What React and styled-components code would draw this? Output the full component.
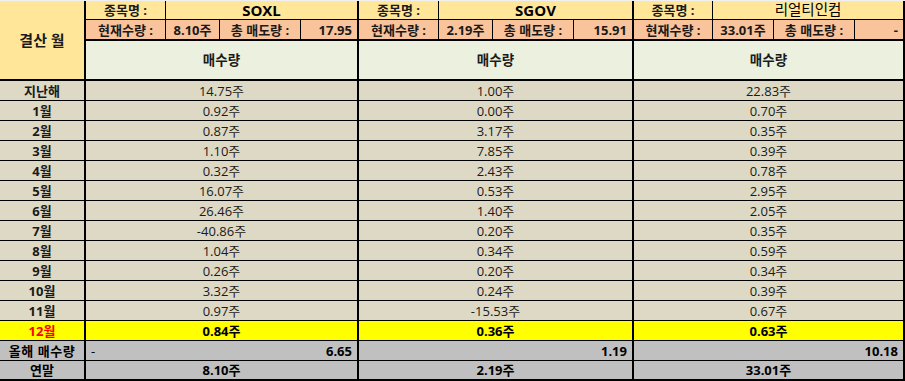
import React from 'react';
import styled, { createGlobalStyle } from 'styled-components';

const GlobalStyle = createGlobalStyle`
  html, body {
    margin: 0;
    padding: 0;
    background: #f0f0f0;
  }
  body {
    font-family: "Open Sans", "Noto Sans CJK KR", sans-serif;
  }
`;

const COLS = [86, 80, 54, 81, 58, 80, 54, 81, 60, 79, 61, 81, 50];

const Sheet = styled.div`
  display: grid;
  grid-template-columns: ${COLS.map((w) => `${w}px`).join(' ')};
  grid-template-rows: 19px 21px 40px repeat(13, 20px) 20px 20px;
  padding-top: 1px;
  width: 905px;
`;

const Cell = styled.div`
  box-sizing: border-box;
  display: flex;
  align-items: center;
  justify-content: ${(p) => p.$align || 'center'};
  grid-column: span ${(p) => p.$span || 1};
  grid-row: span ${(p) => p.$rows || 1};
  border-right: ${(p) => (p.$br ?? 1)}px solid #000;
  border-bottom: ${(p) => (p.$bb ?? 1)}px solid #000;
  background: ${(p) => p.$bg || '#DDD9C4'};
  color: ${(p) => p.$color || '#1a1a1a'};
  font-size: ${(p) => p.$size || 13}px;
  font-weight: ${(p) => (p.$bold ? 700 : 400)};
  padding: 1px ${(p) => (p.$align && p.$align !== 'center' ? 5 : 0)}px 0;
  white-space: nowrap;
  line-height: 1;
  letter-spacing: ${(p) => (p.$spread ? '0.04em' : 'normal')};
`;

const C = {
  gold: '#FFE699',
  peach: '#F9C39B',
  mint: '#EBF1DE',
  tan: '#DDD9C4',
  yellow: '#FFFF00',
  gray: '#C0C0C0',
};

const stocks = [
  { name: 'SOXL', bold: true, qty: '8.10주', sold: '17.95', year: '6.65', dash: true, end: '8.10주', dec: '0.84주' },
  { name: 'SGOV', bold: true, qty: '2.19주', sold: '15.91', year: '1.19', end: '2.19주', dec: '0.36주' },
  { name: '리얼티인컴', bold: false, qty: '33.01주', sold: '-', year: '10.18', end: '33.01주', dec: '0.63주' },
];

const months = [
  ['지난해', '14.75주', '1.00주', '22.83주'],
  ['1월', '0.92주', '0.00주', '0.70주'],
  ['2월', '0.87주', '3.17주', '0.35주'],
  ['3월', '1.10주', '7.85주', '0.39주'],
  ['4월', '0.32주', '2.43주', '0.78주'],
  ['5월', '16.07주', '0.53주', '2.95주'],
  ['6월', '26.46주', '1.40주', '2.05주'],
  ['7월', '-40.86주', '0.20주', '0.35주'],
  ['8월', '1.04주', '0.34주', '0.59주'],
  ['9월', '0.26주', '0.20주', '0.34주'],
  ['10월', '3.32주', '0.24주', '0.39주'],
  ['11월', '0.97주', '-15.53주', '0.67주'],
];

const App = () => {
  return (
    <>
      <GlobalStyle />
      <Sheet>
        {/* header row 1 */}
        <Cell $rows={3} $bg={C.gold} $br={2} $bb={2} $bold $size={15}>결산 월</Cell>
        {stocks.map((s) => (
          <React.Fragment key={'a' + s.name}>
            <Cell $bg={C.gold} $bold>종목명 :</Cell>
            <Cell $span={3} $bg={C.gold} $br={2} $bold={s.bold} $size={s.bold ? 15 : 14.5} $color="#000">
              {s.name}
            </Cell>
          </React.Fragment>
        ))}

        {/* header row 2 */}
        {stocks.map((s) => (
          <React.Fragment key={'b' + s.name}>
            <Cell $bg={C.peach} $bb={2} $bold>현재수량 :</Cell>
            <Cell $bg={C.peach} $bb={2} $bold>{s.qty}</Cell>
            <Cell $bg={C.peach} $bb={2} $bold>총 매도량 :</Cell>
            <Cell $bg={C.peach} $bb={2} $br={2} $bold $align="flex-end">{s.sold}</Cell>
          </React.Fragment>
        ))}

        {/* header row 3 */}
        {stocks.map((s) => (
          <Cell key={'c' + s.name} $span={4} $bg={C.mint} $bb={2} $br={2} $bold $size={13.5}>
            매수량
          </Cell>
        ))}

        {months.map(([label, ...vals]) => (
          <React.Fragment key={label}>
            <Cell $br={2} $bold>{label}</Cell>
            {vals.map((v, i) => (
              <Cell key={i} $span={4} $br={2}>{v}</Cell>
            ))}
          </React.Fragment>
        ))}

        <Cell $br={2} $bg={C.yellow} $bold $color="#ff0000">12월</Cell>
        {stocks.map((s) => (
          <Cell key={'d' + s.name} $span={4} $br={2} $bg={C.yellow} $bold $color="#000">{s.dec}</Cell>
        ))}

        <Cell $br={2} $bg={C.gray} $bold $color="#000" $spread>올해 매수량</Cell>
        {stocks.map((s) => (
          <Cell
            key={'y' + s.name}
            $span={4}
            $br={2}
            $bg={C.gray}
            $bold
            $color="#000"
            $align={s.dash ? 'space-between' : 'flex-end'}
          >
            {s.dash && <span style={{ fontWeight: 400 }}>-</span>}
            <span>{s.year}</span>
          </Cell>
        ))}

        <Cell $br={2} $bb={2} $bg={C.gray} $bold $color="#000">연말</Cell>
        {stocks.map((s) => (
          <Cell key={'e' + s.name} $span={4} $br={2} $bb={2} $bg={C.gray} $bold $color="#000">{s.end}</Cell>
        ))}
      </Sheet>
    </>
  );
};

export default App;
